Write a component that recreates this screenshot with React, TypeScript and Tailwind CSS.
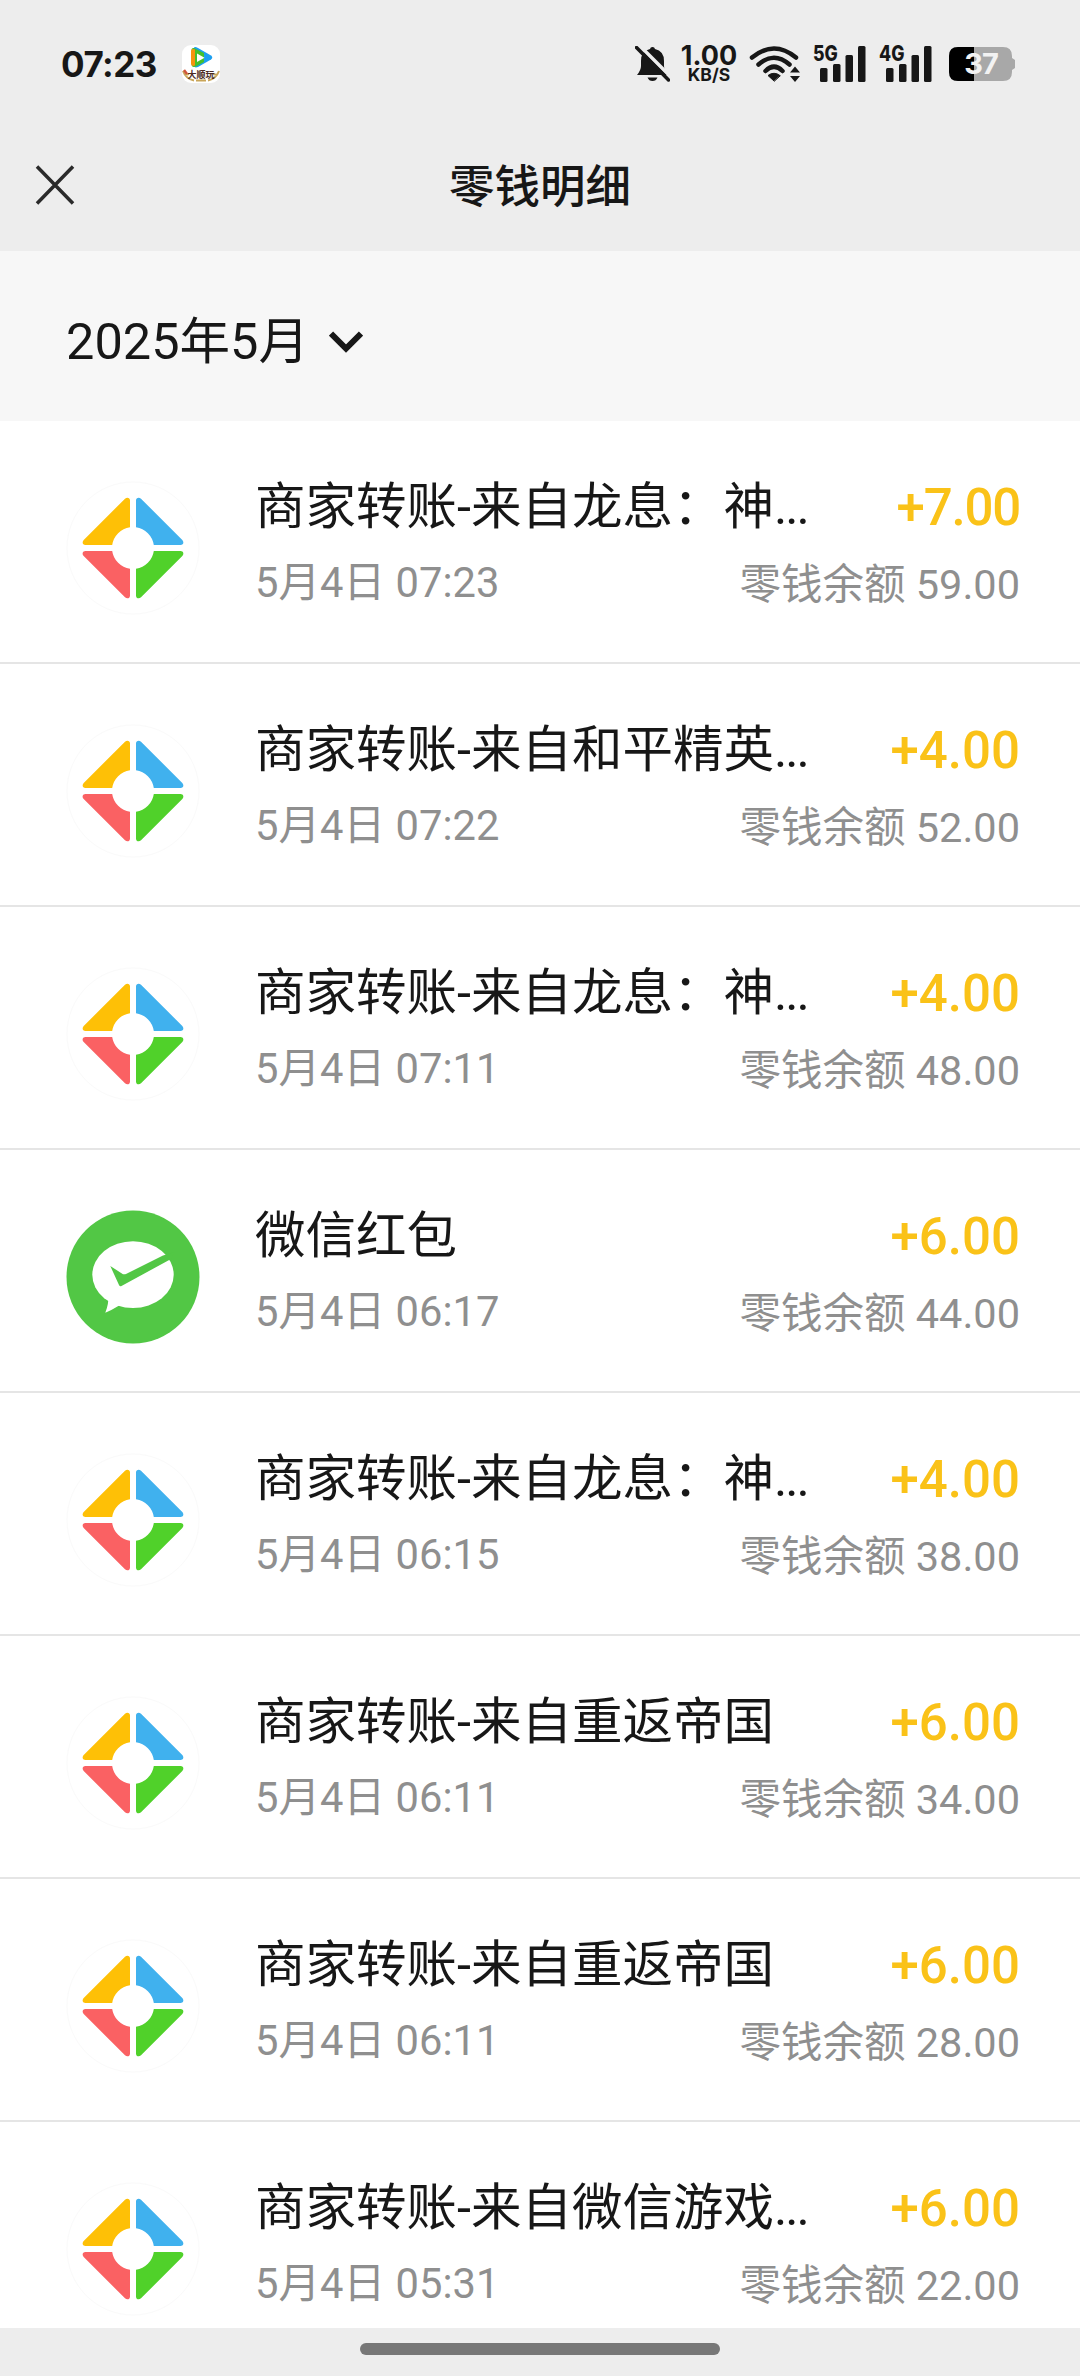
import type { ReactNode } from 'react'

type Kind = 'game' | 'packet'

type Entry = {
  kind: Kind
  title: string
  clipped?: boolean
  time: string
  amount: string
  balance: string
}

const entries: Entry[] = [
  { kind: 'game', title: '商家转账-来自龙息：神', clipped: true, time: '5月4日 07:23', amount: '+7.00', balance: '59.00' },
  { kind: 'game', title: '商家转账-来自和平精英', clipped: true, time: '5月4日 07:22', amount: '+4.00', balance: '52.00' },
  { kind: 'game', title: '商家转账-来自龙息：神', clipped: true, time: '5月4日 07:11', amount: '+4.00', balance: '48.00' },
  { kind: 'packet', title: '微信红包', time: '5月4日 06:17', amount: '+6.00', balance: '44.00' },
  { kind: 'game', title: '商家转账-来自龙息：神', clipped: true, time: '5月4日 06:15', amount: '+4.00', balance: '38.00' },
  { kind: 'game', title: '商家转账-来自重返帝国', time: '5月4日 06:11', amount: '+6.00', balance: '34.00' },
  { kind: 'game', title: '商家转账-来自重返帝国', time: '5月4日 06:11', amount: '+6.00', balance: '28.00' },
  { kind: 'game', title: '商家转账-来自微信游戏', clipped: true, time: '5月4日 05:31', amount: '+6.00', balance: '22.00' },
]

function GameLogo() {
  const piece =
    'M-3-20.8A21 21 0 0 0-20.8-3H-47.5C-50.5-3-51.2-6-49.3-8L-8-49.3C-6-51.2-3-50.5-3-47.5Z'
  return (
    <svg viewBox="-67 -67 134 134" className="size-[134px]">
      <circle r="66" fill="#fff" stroke="#fafafa" />
      <path d={piece} fill="#fec006" />
      <path d={piece} fill="#40b1ee" transform="rotate(90)" />
      <path d={piece} fill="#50d12a" transform="rotate(180)" />
      <path d={piece} fill="#fa6163" transform="rotate(270)" />
    </svg>
  )
}

function PacketLogo() {
  return (
    <svg viewBox="0 0 134 134" className="size-[134px]">
      <circle cx="67" cy="67" r="66.5" fill="#52c745" />
      <ellipse cx="67" cy="64.7" rx="40.7" ry="33.4" fill="#fff" />
      <path d="M42 88Q43 93 39.3 102.7Q46 100 52.3 96L60 92Z" fill="#fff" />
      <path d="M44.3 56L57 64.2Q58.5 64.6 60 64L97 45.5L109 42L105 49L55.5 76Q53.8 76.8 53 75Z" fill="#52c745" />
    </svg>
  )
}

function VideoAppIcon() {
  return (
    <svg viewBox="0 0 38 38" className="ml-[25px] size-[38px]">
      <rect width="38" height="38" rx="9" fill="#fff" />
      <path d="M12 2.500Q13 1.500 16 3L29 10.500Q31.500 12.500 29 14.500L16 22Q12 23.500 11 20Z" fill="#1c9ff0" />
      <path d="M9.500 5Q9.500 2.500 12 3L22 8V17L14 21.500Q9.500 23 9.500 19Z" fill="#45c02c" />
      <path d="M9 6Q9 3 13 4.500V20.500Q9 22 9 18.500Z" fill="#f7930f" />
      <path d="M15 8.500L22.500 12.700L15 17Z" fill="#fff" />
      <path d="M1 26Q4 34 12 35.500M37 26Q34 34 26 35.500M3 30L7 29M35 30L31 29M14 35.500H24" stroke="#c9a558" strokeWidth="2" fill="none" />
      <path d="M2 25L5 29" stroke="#d0553a" strokeWidth="2.500" />
      <text x="19" y="33" textAnchor="middle" className="fill-[#4a2a20] text-[9px] font-bold">大顺玩</text>
    </svg>
  )
}

function Signal({ label }: { label: string }) {
  return (
    <div className="relative h-[36px] w-[52px]">
      <svg viewBox="0 0 52 36" className="h-[36px] w-[52px]" fill="#171717">
        <rect x="6" y="22" width="7.500" height="14" rx="1.500" />
        <rect x="19" y="18" width="7.500" height="18" rx="1.500" />
        <rect x="31.500" y="9" width="7.500" height="27" rx="1.500" />
        <rect x="44" y="0" width="7.500" height="36" rx="1.500" />
      </svg>
      <span className="absolute -top-[3px] -left-px origin-left scale-x-[0.84] font-['Inter'] text-[21px] leading-[21px] font-extrabold">
        {label}
      </span>
    </div>
  )
}

function StatusBar() {
  return (
    <div className="flex h-[128px] shrink-0 items-center pl-[61px] pr-[64px] text-[#171717]">
      <span className="font-['Inter'] text-[35px] font-bold tracking-[-0.5px]">07:23</span>
      <VideoAppIcon />
      <div className="grow" />
      <svg viewBox="0 0 35 36" className="h-[36px] w-[35px]" fill="#171717">
        <path d="M17.500 1A2.500 2.500 0 0 1 20 3Q29 5 29 15V20Q29 24 33 29H2Q6 24 6 20V15Q6 5 15 3A2.500 2.500 0 0 1 17.500 1Z" />
        <path d="M12.500 31.500H22.500Q21 35 17.500 35T12.500 31.500Z" />
        <path d="M3 -2L37 32" stroke="#ededed" strokeWidth="3.500" />
        <path d="M1.500 1.500L33.500 34" stroke="#171717" strokeWidth="3.500" strokeLinecap="round" />
      </svg>
      <div className="ml-[11px] flex w-[56px] flex-col items-center font-['Inter'] font-bold">
        <span className="text-[27px] leading-[21px]">1.00</span>
        <span className="mt-px text-[17.500px] leading-[16px]">KB/S</span>
      </div>
      <svg viewBox="0 0 52 36" className="ml-[12px] h-[36px] w-[52px]" fill="none" stroke="#171717" strokeWidth="4.500" strokeLinecap="round">
        <path d="M3 11.500Q25 -6.500 47 11.500M9.500 18.500Q25 5 40.500 18.500M16.500 25Q25 16.500 33.500 25" />
        <path d="M25 35L19 29.500Q25 25 31 29.500Z" fill="#171717" strokeWidth="1" strokeLinejoin="round" />
        <path d="M46 20.500L51 26.500H41ZM46 36L51 30H41Z" fill="#171717" stroke="none" />
      </svg>
      <div className="ml-[13px]">
        <Signal label="5G" />
      </div>
      <div className="ml-[14px]">
        <Signal label="4G" />
      </div>
      <div className="relative ml-[17px] flex h-[34px] w-[67px] items-center">
        <svg viewBox="0 0 67 34" className="absolute inset-0 h-[34px] w-[67px]">
          <path d="M9 0H54Q63 0 63 9V11L66 13V21L63 23V25Q63 34 54 34H9Q0 34 0 25V9Q0 0 9 0Z" fill="#a8a8a8" />
          <path d="M9 0H25V34H9Q0 34 0 25V9Q0 0 9 0Z" fill="#000" />
        </svg>
        <span className="relative w-[64px] text-center font-['Inter'] text-[29px] leading-[34px] font-bold tracking-[-1px] text-[#f2f2f2]">
          37
        </span>
      </div>
    </div>
  )
}

function Line({ children }: { children: ReactNode }) {
  return <div className="flex items-center justify-between whitespace-nowrap">{children}</div>
}

function Row({ entry }: { entry: Entry }) {
  return (
    <li className="flex h-[243px] shrink-0 border-b-2 border-[#e5e5e5] bg-white pl-[66px] pr-[60px] pt-[60px]">
      {entry.kind === 'game' ? <GameLogo /> : <PacketLogo />}
      <div className="-mt-[9px] ml-[55px] grow">
        <Line>
          <span className="text-[50.5px] leading-[66px] text-[#171717]">
            {entry.title}
            {entry.clipped && <span className="tracking-[-2px]">...</span>}
          </span>
          <span
            className={`mt-[3px] text-[51px] leading-[66px] font-medium text-[#fac218] ${
              entry.amount === '+7.00' ? 'tracking-[-1.2px]' : ''
            }`}
          >
            {entry.amount}
          </span>
        </Line>
        <Line>
          <span className="mt-[9px] text-[41.7px] leading-[60px] text-[#8f8f8f]">{entry.time}</span>
          <span className="mt-[14px] text-[41.5px] leading-[60px] text-[#8f8f8f]">零钱余额 {entry.balance}</span>
        </Line>
      </div>
    </li>
  )
}

export default function App() {
  return (
    <div className="flex h-[2376px] w-[1080px] flex-col overflow-hidden bg-[#ededed] font-['Roboto','Noto_Sans_CJK_SC',sans-serif]">
      <StatusBar />
      <header className="grid h-[123px] shrink-0 grid-cols-[1fr_auto_1fr] items-center px-[35px] pb-[9px] text-[#171717]">
        <svg viewBox="0 0 40 40" className="size-[40px]" fill="none" stroke="#2a2a2a" strokeWidth="3.500">
          <path d="M2 1.500L38 38.500M38 1.500L2 38.500" />
        </svg>
        <h1 className="mt-[7px] text-[45.5px] font-medium">零钱明细</h1>
      </header>
      <div className="flex h-[170px] shrink-0 items-center bg-[#f7f7f7] pt-[12px] pl-[66px] text-[#171717]">
        <span className="text-[50.5px]">2025年5月</span>
        <svg viewBox="0 0 34 22" className="ml-[20px] h-[22px] w-[34px]" fill="none" stroke="#171717" strokeWidth="6">
          <path d="M2 2.500L17 17.500L32 2.500" />
        </svg>
      </div>
      <ul className="flex min-h-0 grow flex-col overflow-hidden bg-white">
        {entries.map((entry, i) => (
          <Row key={i} entry={entry} />
        ))}
      </ul>
      <div className="flex h-[48px] shrink-0 justify-center pt-[15px]">
        <div className="h-[12px] w-[360px] rounded-full bg-[#777]" />
      </div>
    </div>
  )
}
